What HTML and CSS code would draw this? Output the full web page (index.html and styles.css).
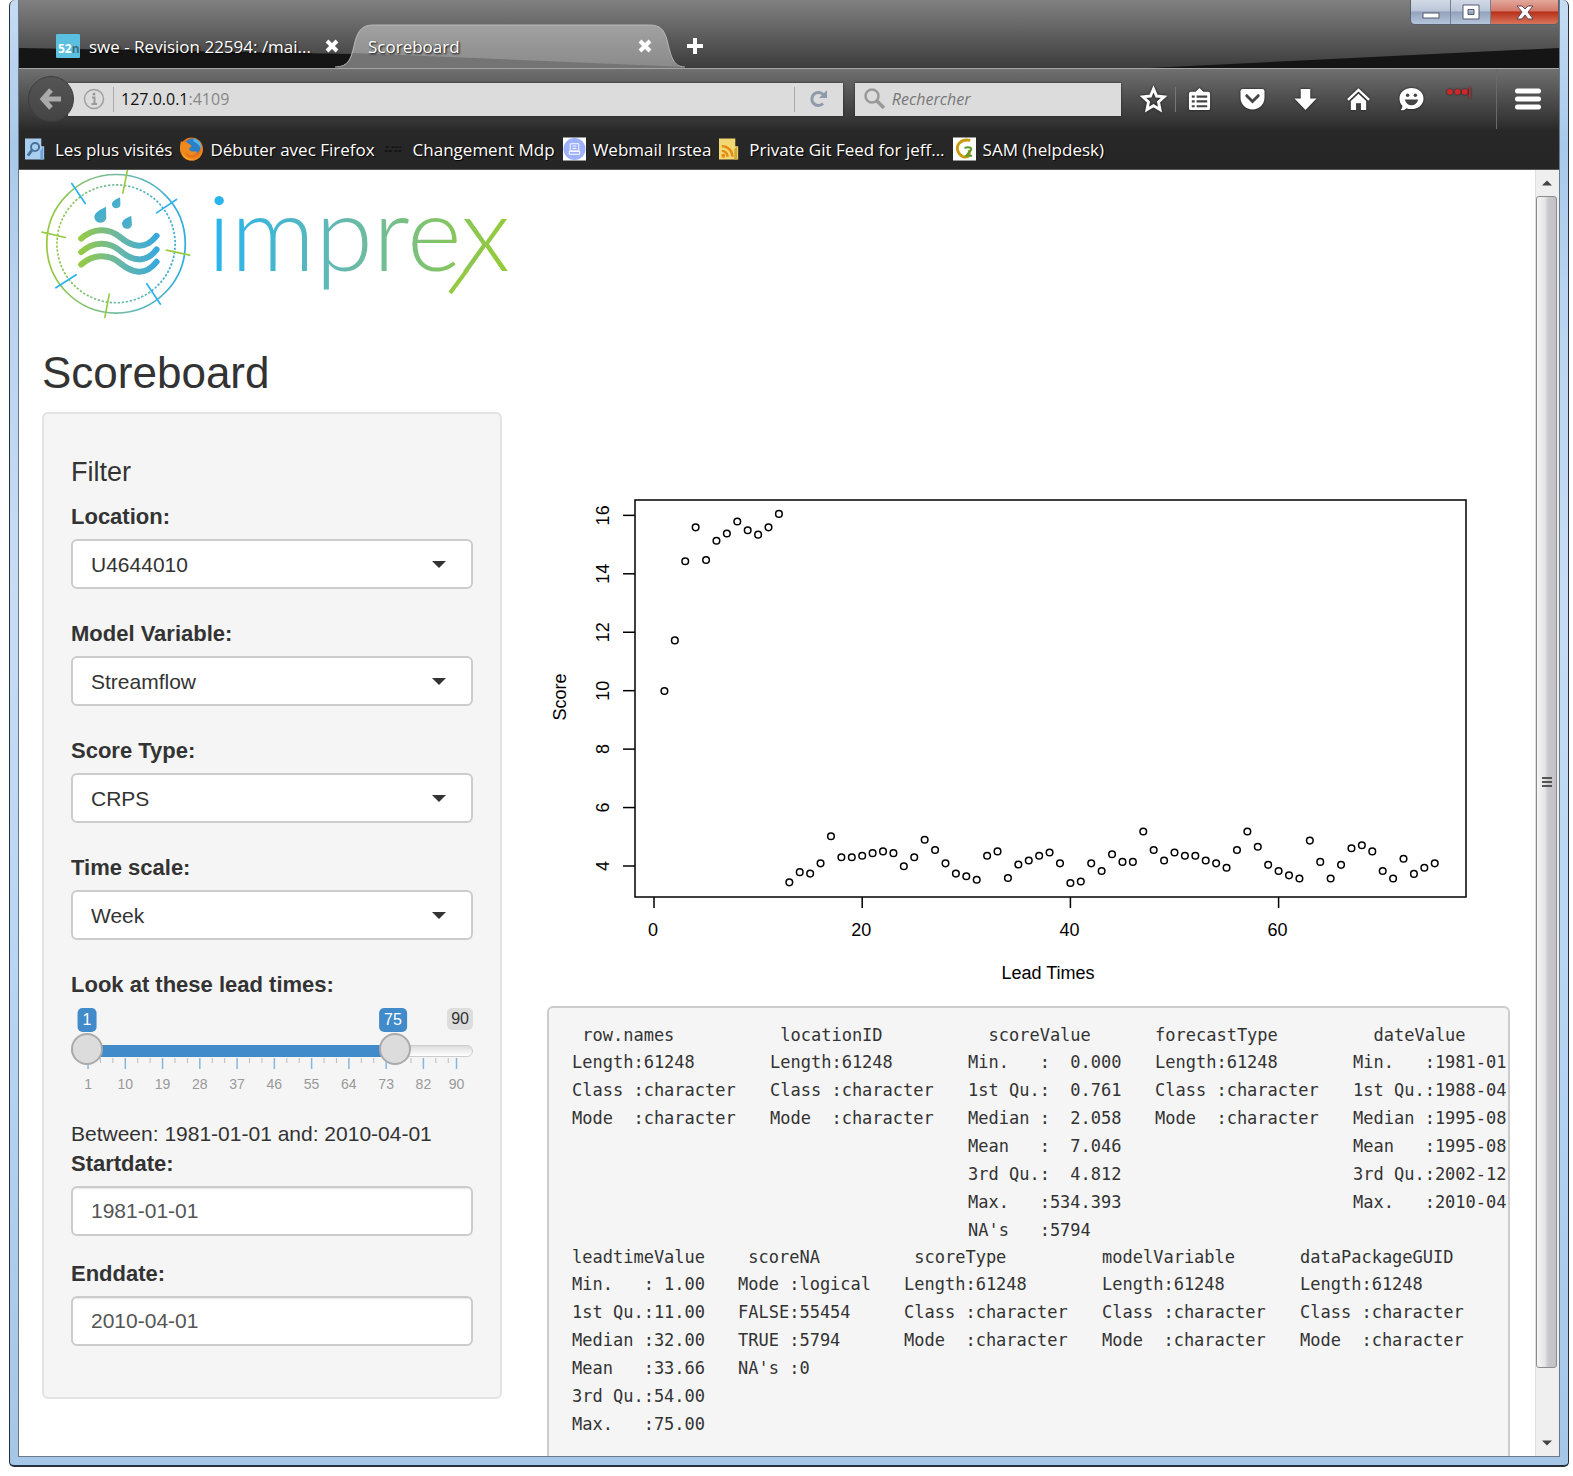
FILE: index.html
```html
<!DOCTYPE html>
<html lang="fr">
<head>
<meta charset="utf-8">
<title>Scoreboard</title>
<link rel="stylesheet" href="styles.css">
</head>
<body>
<div class="window">
  <div class="inner">
    <header class="titlebar">
      <div class="tabs">
        <button class="tab" type="button">
          <svg class="fav" viewBox="0 0 24 24" aria-hidden="true"><rect width="24" height="24" rx="1" fill="#5bbfe0"/><text x="2" y="19" class="fav-text">52<tspan fill="#3d6f7f">n</tspan></text></svg>
          <span class="tab-title">swe - Revision 22594: /mai...</span>
          <svg class="close" viewBox="0 0 14 14" aria-hidden="true"><path d="M2 2 12 12M12 2 2 12"/></svg>
        </button>
        <button class="tab active" type="button">
          <svg class="tab-shape" viewBox="0 0 350 44" preserveAspectRatio="none" aria-hidden="true">
            <defs>
              <linearGradient id="tabfill" x1="0" y1="0" x2="0" y2="1"><stop offset="0" stop-color="#a2a2a2"/><stop offset="1" stop-color="#8a8a8a"/></linearGradient>
              <clipPath id="tabclip"><path d="M0 44C14 43 16 34 19 22C22 8 26 1 38 1H314C326 1 329 6 332 16C336 32 338 43 350 44Z"/></clipPath>
            </defs>
            <g clip-path="url(#tabclip)"><rect width="350" height="44" fill="url(#tabfill)"/><path d="M0 29 18 29 350 43V44H0Z" fill="#747474"/></g>
            <path d="M0 43C14 43 16 34 19 22C22 8 26 1 38 1H314C326 1 329 6 332 16C336 32 338 43 350 43" fill="none" stroke="#b9b9b9"/>
          </svg>
          <span class="tab-title">Scoreboard</span>
          <svg class="close" viewBox="0 0 14 14" aria-hidden="true"><path d="M2 2 12 12M12 2 2 12"/></svg>
        </button>
        <button class="newtab" type="button" aria-label="Nouvel onglet"><svg viewBox="0 0 16 16" width="16" height="16"><path d="M8 0V16M0 8H16" stroke="#fff" stroke-width="4"/></svg></button>
      </div>
      <div class="winbuttons">
        <button class="wb" type="button" aria-label="Réduire"><svg width="18" height="18" viewBox="0 0 18 18"><rect x="1" y="10" width="16" height="5" fill="#fff" stroke="#555b70"/></svg></button>
        <button class="wb" type="button" aria-label="Agrandir"><svg width="18" height="18" viewBox="0 0 18 18"><path d="M1 2H17V16H1ZM6 6.500V11.500H12V6.500Z" fill="#fff" fill-rule="evenodd" stroke="#555b70"/></svg></button>
        <button class="wb wb-close" type="button" aria-label="Fermer"><svg width="18" height="18" viewBox="0 0 18 18"><path d="M1 3H6L9 6 12 3H17L12 9 17 16H12L9 12 6 16H1L6 9Z" fill="#fff" stroke="#5d4550"/></svg></button>
      </div>
    </header>

    <div class="toolbars">
      <div class="nav">
        <button class="back" type="button" aria-label="Retour"><svg width="24" height="24" viewBox="0 0 24 24"><path d="M12 3 4 12 12 21M4 12H22" fill="none" stroke="#aaa" stroke-width="5"/></svg></button>
        <div class="urlbar">
          <svg class="info" viewBox="0 0 22 22" aria-hidden="true"><circle cx="11" cy="11" r="9.500" fill="none" stroke="#a0a0a0" stroke-width="1.500"/><path d="M9 9.500H11.500V16M8.500 16H14" fill="none" stroke="#999" stroke-width="2"/><circle cx="11" cy="6" r="1.500" fill="#999"/></svg>
          <div class="url"><b>127.0.0.1</b>:4109</div>
          <button class="reload" type="button" aria-label="Actualiser"><svg width="20" height="20" viewBox="0 0 20 20"><path d="M14 14.500A6.500 6.500 0 1 1 14.500 6" fill="none" stroke="#8f9baa" stroke-width="3"/><path d="M18 1V9H10Z" fill="#8f9baa"/></svg></button>
        </div>
        <div class="searchbar">
          <svg width="22" height="22" viewBox="0 0 22 22" aria-hidden="true"><circle cx="8" cy="8" r="6.500" fill="none" stroke="#999" stroke-width="2.500"/><path d="M12.500 12.500 20 20" stroke="#999" stroke-width="3.500"/></svg>
          <input class="search" type="text" placeholder="Rechercher" aria-label="Rechercher">
        </div>
        <button class="tool star" type="button" aria-label="Marque-page"><svg viewBox="0 0 26 26"><path d="M13 2 16.200 9.400 24 10.200 18.200 15.500 19.800 23.500 13 19.500 6.200 23.500 7.800 15.500 2 10.200 9.800 9.400Z" fill="none" stroke="#fff" stroke-width="3"/></svg></button>
        <span class="sep"></span>
        <div class="tools">
          <button class="tool" type="button" aria-label="Liste"><svg viewBox="0 0 26 26"><path d="M4 5H9L13 1 17 5H22Q24 5 24 7V22Q24 24 22 24H4Q2 24 2 22V7Q2 5 4 5Z" fill="#fff"/><path d="M5 10H8M5 15H8M5 20H8M10 10H21M10 15H21M10 20H21" stroke="#444" stroke-width="2.200"/></svg></button>
          <button class="tool" type="button" aria-label="Pocket"><svg viewBox="0 0 26 26"><path d="M3 2H23Q25.500 2 25.500 4.500V11C25.500 18 20 23.500 13 23.500S.5 18 .5 11V4.500Q.5 2 3 2Z" fill="#fff"/><path d="M7 9 13 15 19 9" fill="none" stroke="#444" stroke-width="3" stroke-linecap="round"/></svg></button>
          <button class="tool" type="button" aria-label="Téléchargements"><svg viewBox="0 0 26 26"><path d="M8 2H18V12H24.500L13 24 1.500 12H8Z" fill="#fff"/></svg></button>
          <button class="tool" type="button" aria-label="Accueil"><svg viewBox="0 0 26 26"><path d="M2 13.500 13 3 24 13.500" fill="none" stroke="#fff" stroke-width="2.500"/><path d="M5 14.500 13 7 21 14.500V24H15.500V17H10.500V24H5Z" fill="#fff"/></svg></button>
          <button class="tool" type="button" aria-label="Discussion"><svg viewBox="0 0 26 26"><path d="M13 1C20 1 25.500 5.500 25.500 12S20 23 13 23C11 23 9.500 22.600 8 22 6.500 23.500 4 24.500 1.500 24 3 23 3.500 21 3.500 19.500 1.500 17.500.5 15 .5 12 .5 5.500 6 1 13 1Z" fill="#fff"/><circle cx="9" cy="8.500" r="1.800" fill="#444"/><circle cx="17" cy="8.500" r="1.800" fill="#444"/><path d="M6 13H20C19 17 16.500 19 13 19S7 17 6 13Z" fill="#444"/></svg></button>
          <button class="tool pass" type="button" aria-label="Mots de passe"><svg viewBox="0 0 26 26"><circle cx="3" cy="5" r="3"/><circle cx="11" cy="5" r="3"/><circle cx="18.500" cy="5" r="3"/><path d="M23 0H24.500V11H23Z"/></svg></button>
        </div>
        <button class="menu" type="button" aria-label="Menu"><svg width="26" height="22" viewBox="0 0 26 22"><path d="M2.500 3H23.500M2.500 11H23.500M2.500 19H23.500" stroke="#fff" stroke-width="5" stroke-linecap="round"/></svg></button>
      </div>
      <nav class="bookmarks">
        <a href="#"><svg viewBox="0 0 24 24"><path d="M0 1H17V9H20V23H0Z" fill="#a9cdee"/><path d="M16 14 19 9V23H16Z" fill="#6fa5d5"/><circle cx="10.500" cy="10" r="4.200" fill="none" stroke="#47719b" stroke-width="2"/><path d="M7.500 13 3 19" stroke="#47719b" stroke-width="3"/></svg>Les plus visités</a>
        <a href="#"><svg viewBox="0 0 24 24"><circle cx="12" cy="12" r="12" fill="#e8731c"/><circle cx="13" cy="9.500" r="8.500" fill="#2a7fc8"/><path d="M14 1C20 2 23 7 22 12 20 8 18 6 14 4Z" fill="#4db8f0"/><path d="M1 4C3 5 5 5 7 5 9 7 11 7 12 9 10 11 8 12 11 14 14 15 16 14 18 15 15 20 9 19 7 16 4 18 10 22 15 21 21 19 23 14 22 8 26 15 21 24 12 24 3 24-2 14 1 4Z" fill="#f08a1d"/><path d="M2 15C4 21 9 23 14 23 9 24 3 21 2 15Z" fill="#ffd23f"/></svg>Débuter avec Firefox</a>
        <a href="#"><svg viewBox="0 0 24 24"><path d="M3 10H7M9 10H19M2 14H10M12 14H20" stroke="#151515" stroke-width="2" stroke-dasharray="3 1"/></svg>Changement Mdp</a>
        <a href="#"><svg viewBox="0 0 24 24"><rect width="24" height="24" fill="#fff"/><circle cx="12" cy="12" r="11.500" fill="#9fb1fb"/><path d="M7.500 6.500H16.500V14H7.500ZM10 9H14M10 11.500H14M6.500 17.500H17.500V14.500H6.500Z" fill="none" stroke="#fff"/></svg>Webmail Irstea</a>
        <a href="#"><svg viewBox="0 0 24 24"><path d="M0 1H17V9H20V23H0Z" fill="#f2d873"/><path d="M16 12 19 9V23H16Z" fill="#cfa93a"/><path d="M3 9A11 11 0 0 1 14 20M3 14A6 6 0 0 1 9 20" fill="none" stroke="#e58a12" stroke-width="2.500"/><circle cx="4.500" cy="19" r="2" fill="#e58a12"/></svg>Private Git Feed for jeff...</a>
        <a href="#"><svg viewBox="0 0 24 24"><rect width="24" height="24" fill="#fff"/><path d="M18 3C8 1 3 8 5 14 7 20 13 22 17 19V13" fill="none" stroke="#c99b0a" stroke-width="3"/><path d="M12 11C17 9 21 11 18 14L14 19H20" fill="none" stroke="#5d9a2b" stroke-width="2.200"/></svg>SAM (helpdesk)</a>
      </nav>
    </div>

    <div class="viewport">
      <main class="page">
        <svg class="logo" viewBox="124 30 1400 450" role="img" aria-label="imprex">
          <defs>
            <linearGradient id="ring" gradientUnits="userSpaceOnUse" x1="138" y1="250" x2="549" y2="250"><stop offset="0" stop-color="#97c93d"/><stop offset=".55" stop-color="#6fb9a8"/><stop offset="1" stop-color="#2fabe1"/></linearGradient>
            <linearGradient id="wave" gradientUnits="userSpaceOnUse" x1="232" y1="250" x2="470" y2="250"><stop offset="0" stop-color="#97cb42"/><stop offset=".5" stop-color="#6ab7a5"/><stop offset="1" stop-color="#35a9e0"/></linearGradient>
            <linearGradient id="drop" x1="0" y1="0" x2="1" y2="1"><stop offset="0" stop-color="#35a9e0"/><stop offset="1" stop-color="#5ab2b8"/></linearGradient>
            <linearGradient id="word" gradientUnits="userSpaceOnUse" x1="635" y1="0" x2="1515" y2="0"><stop offset="0" stop-color="#29b4ef"/><stop offset=".45" stop-color="#68b9ac"/><stop offset="1" stop-color="#97cc33"/></linearGradient>
          </defs>
          <g transform="scale(1 .986)">
          <g fill="none" stroke="url(#ring)">
            <ellipse cx="343" cy="252" rx="205" ry="208" stroke-width="5"/>
            <ellipse cx="343" cy="252" rx="175" ry="177" stroke-width="5" stroke-dasharray="7 5"/>
          </g>
          <g stroke-width="5" stroke-linecap="round">
            <path stroke="#97cb42" d="M377 30 363 100M124 217 193 233M492 271 561 286M323 403 310 473"/>
            <path stroke="#29b4ef" d="M212 71 252 131M522 119 463 159M165 384 225 345M434 372 474 433"/>
          </g>
          <g fill="none" stroke="url(#wave)" stroke-width="18" stroke-linecap="round">
            <path d="M240 236C275 205 320 202 355 232S430 272 463 228"/>
            <path d="M240 277C275 246 320 243 355 273S430 313 463 269"/>
            <path d="M240 314C275 283 320 280 355 310S430 350 463 306"/>
          </g>
          <g fill="url(#drop)">
            <path d="M313 141C300 148 279 158 279 171 279 182 287 189 297 189 308 189 316 181 314 168Z"/>
            <path d="M355 112C346 117 331 123 331 133 331 141 337 145 344 145 352 145 357 140 356 131Z"/>
            <path d="M388 168C378 173 361 180 361 191 361 201 368 207 376 207 385 207 391 200 390 190Z"/>
          </g>
          </g>
          <text class="wordmark" x="614" y="328" fill="url(#word)">imprex</text>
          <path d="M1384 324 1332 394" stroke="#93ca41" stroke-width="12"/>
        </svg>
        <h2>Scoreboard</h2>
        <div class="layout">
          <form class="well">
            <h4>Filter</h4>
            <div class="group"><label for="loc">Location:</label><div class="select"><select id="loc"><option>U4644010</option></select></div></div>
            <div class="group"><label for="mv">Model Variable:</label><div class="select"><select id="mv"><option>Streamflow</option></select></div></div>
            <div class="group"><label for="st">Score Type:</label><div class="select"><select id="st"><option>CRPS</option></select></div></div>
            <div class="group"><label for="ts">Time scale:</label><div class="select"><select id="ts"><option>Week</option></select></div></div>
            <div class="slider-group">
              <label for="from">Look at these lead times:</label>
              <div class="slider">
                <output class="bubble from" for="from">1</output>
                <output class="bubble to" for="to">75</output>
                <span class="bubble max">90</span>
                <div class="track"><div class="fill"></div></div>
                <input id="from" class="range" type="range" min="1" max="90" value="1">
                <input id="to" class="range" type="range" min="1" max="90" value="75" aria-label="Lead time, upper bound">
              </div>
              <svg class="scale" id="scale" viewBox="0 0 401 38" aria-hidden="true"></svg>
            </div>
            <p>Between: 1981-01-01 and: 2010-04-01</p>
            <div class="date"><label for="sd">Startdate:</label><input id="sd" class="field" type="text" value="1981-01-01"></div>
            <div class="date"><label for="ed">Enddate:</label><input id="ed" class="field" type="text" value="2010-04-01"></div>
          </form>
          <div class="results">
            <svg class="plot" id="plot" viewBox="0 0 963 594" role="img" aria-label="Score by lead time"></svg>
            <div class="summary">
              <table>
                <colgroup><col class="c19"><col class="c19"><col class="c18"><col class="c19"><col></colgroup>
                <thead><tr><th> row.names</th><th> locationID</th><th>  scoreValue</th><th>forecastType</th><th>  dateValue</th></tr></thead>
                <tbody>
                <tr><td>Length:61248</td><td>Length:61248</td><td>Min.   :  0.000</td><td>Length:61248</td><td>Min.   :1981-01</td></tr>
                <tr><td>Class :character</td><td>Class :character</td><td>1st Qu.:  0.761</td><td>Class :character</td><td>1st Qu.:1988-04</td></tr>
                <tr><td>Mode  :character</td><td>Mode  :character</td><td>Median :  2.058</td><td>Mode  :character</td><td>Median :1995-08</td></tr>
                <tr><td></td><td></td><td>Mean   :  7.046</td><td></td><td>Mean   :1995-08</td></tr>
                <tr><td></td><td></td><td>3rd Qu.:  4.812</td><td></td><td>3rd Qu.:2002-12</td></tr>
                <tr><td></td><td></td><td>Max.   :534.393</td><td></td><td>Max.   :2010-04</td></tr>
                <tr><td></td><td></td><td>NA's   :5794</td><td></td><td></td></tr>
                </tbody>
              </table>
              <table>
                <colgroup><col class="c16"><col class="c16"><col class="c19"><col class="c19"><col></colgroup>
                <thead><tr><th>leadtimeValue</th><th> scoreNA</th><th> scoreType</th><th>modelVariable</th><th>dataPackageGUID</th></tr></thead>
                <tbody>
                <tr><td>Min.   : 1.00</td><td>Mode :logical</td><td>Length:61248</td><td>Length:61248</td><td>Length:61248</td></tr>
                <tr><td>1st Qu.:11.00</td><td>FALSE:55454</td><td>Class :character</td><td>Class :character</td><td>Class :character</td></tr>
                <tr><td>Median :32.00</td><td>TRUE :5794</td><td>Mode  :character</td><td>Mode  :character</td><td>Mode  :character</td></tr>
                <tr><td>Mean   :33.66</td><td>NA's :0</td><td></td><td></td><td></td></tr>
                <tr><td>3rd Qu.:54.00</td><td></td><td></td><td></td><td></td></tr>
                <tr><td>Max.   :75.00</td><td></td><td></td><td></td><td></td></tr>
                </tbody>
              </table>
            </div>
          </div>
        </div>
      </main>
      <div class="scrollbar" aria-hidden="true">
        <span class="arrow"><svg width="12" height="8" viewBox="0 0 12 8"><path d="M1 6.500 6 1.500 11 6.500Z" fill="#444"/></svg></span>
        <div class="rail"><div class="thumb"><i></i><i></i><i></i></div></div>
        <span class="arrow"><svg width="12" height="8" viewBox="0 0 12 8"><path d="M1 1.500 6 6.500 11 1.500Z" fill="#444"/></svg></span>
      </div>
    </div>
  </div>
</div>
<script src="script.js"></script>
</body>
</html>
```
FILE: styles.css
```css
* { box-sizing: border-box; }
body { margin: 0; background: #fff; font-family: "Liberation Sans", Arial, sans-serif; }
button { border: 0; padding: 0; margin: 0; background: none; color: inherit; font: inherit; display: flex; align-items: center; justify-content: center; }

/* window frame */
.window {
  margin: 0 4px 0 9px; height: calc(100vh - 9px); display: flex;
  padding: 0 8px 8px; border: solid #26303c; border-width: 0 1px 2px;
  border-radius: 6px 6px 5px 5px;
  background: linear-gradient(#c6dcf3, #a9c9ea 10%, #b9d3f0 20%, #c8dcf4 40%, #b9d6f4 65%, #a6c6e8);
}
.inner { flex: 1; min-width: 0; display: flex; flex-direction: column; border: solid #69798a; border-width: 0 1px 1px; background: #fff; }

/* title bar and tabs */
.titlebar { position: relative; z-index: 0; height: 68px; flex: none; display: flex; justify-content: space-between; background: linear-gradient(#808080, #6c6c6c 30%, #3c3c3c); font-family: "Open Sans", "Noto Sans", sans-serif; color: #fff; }
.titlebar::before { content: ""; position: absolute; inset: 0; z-index: -1; background: #151515; clip-path: polygon(0 48px, 333px 54px, 671px 68px, 1130px 68px, 100% 48px, 100% 100%, 0 100%); }
.tabs { display: flex; align-items: flex-end; }
.tab { position: relative; height: 44px; width: 320px; padding: 0 0 0 37px; justify-content: flex-start; gap: 9px; font-size: 17px; text-shadow: 1px 1px 2px #000; }
.tab.active { width: 350px; margin-left: -4px; padding: 0 0 0 33px; }
.tab-title { flex: 1; text-align: left; white-space: nowrap; position: relative; }
.tab-shape { position: absolute; inset: 0; width: 100%; height: 100%; }
.fav { width: 24px; height: 24px; flex: none; }
.fav-text { font: bold 12px "Open Sans", sans-serif; fill: #fff; text-shadow: none; }
.close { position: relative; width: 14px; height: 14px; flex: none; fill: none; stroke: #fff; stroke-width: 4; }
.active .close { margin-right: 33px; }
.newtab { height: 44px; width: 20px; }
.winbuttons { display: flex; height: 25px; border: solid #59616e; border-width: 0 1px 1px; border-radius: 0 0 5px 5px; overflow: hidden; }
.wb { width: 40px; border-right: 1px solid #77808f; background: linear-gradient(#d3dae6, #bac6d8 45%, #93a3bd 50%, #b5c5da); }
.wb-close { width: 67px; border: 0; background: linear-gradient(#e3a79b, #d27a6a 45%, #b8301a 50%, #d7755a); }

/* toolbars */
.toolbars { flex: none; border-top: 1px solid #a5a5a5; background: linear-gradient(#707070, #545454 24%, #3a3a3a 48%, #282828 62%, #252525); font-family: "Open Sans", "Noto Sans", sans-serif; }
.nav { height: 60px; display: flex; align-items: center; padding-left: 9px; }
.back { width: 46px; height: 46px; border-radius: 50%; background: linear-gradient(#555, #444); border: 1px solid #3c3c3c; z-index: 1; flex: none; }
.urlbar { flex: 780; height: 33px; margin-left: -6px; padding-left: 15px; background: #dcdcdc; display: flex; align-items: center; font-size: 16px; box-shadow: 0 0 2px #222; }
.info { width: 22px; height: 22px; flex: none; }
.url { flex: 1; margin-left: 8px; padding-left: 7px; border-left: 1px solid #aaa; line-height: 25px; color: #888; }
.url b { font-weight: 400; color: #111; }
.reload { width: 49px; height: 25px; border-left: 1px solid #aaa; }
.searchbar { flex: 264; min-width: 0; height: 33px; margin-left: 12px; padding-left: 9px; background: #dcdcdc; display: flex; align-items: center; gap: 6px; box-shadow: 0 0 2px #222; }
.search { flex: 1; min-width: 0; border: 0; padding: 0; background: none; font: italic 16px "Open Sans", sans-serif; }
.search::placeholder { color: #777; }
.tool { width: 46px; height: 46px; flex: none; }
.tool svg { width: 25px; height: 25px; filter: drop-shadow(0 0 1px #111); overflow: visible; }
.star { width: 38px; margin-left: 13px; margin-right: 3px; }
.sep { width: 1px; height: 25px; background: #777; }
.tools { display: flex; gap: 7px; margin-right: 9px; }
.pass { justify-content: flex-start; }
.pass svg { fill: #d32727; margin-left: 6px; }
.menu { width: 63px; height: 60px; flex: none; border-left: 1px solid #6a6a6a; }
.bookmarks { height: 40px; display: flex; align-items: center; gap: 8px; padding: 0 6px; font-size: 17px; }
.bookmarks a { display: flex; align-items: center; gap: 7px; color: #fff; text-decoration: none; white-space: nowrap; text-shadow: 1px 1px 1px #000; }
.bookmarks svg { width: 23px; height: 24px; flex: none; }

/* page */
.viewport { flex: 1; min-height: 0; display: flex; border-top: 1px solid #555; overflow: hidden; }
.page { flex: 1; min-width: 0; padding: 0 25px 0 23px; color: #333; }
.logo { display: block; width: 473px; height: 152px; overflow: visible; }
.wordmark { font-family: Lato, sans-serif; font-weight: 300; font-size: 310px; }
h2 { margin: 27px 0 15px; font-size: 44px; line-height: 48px; font-weight: 400; }
.layout { display: grid; grid-template-columns: 460fr 963fr; gap: 45px; align-items: start; }
.well { border: 2px solid #e3e3e3; border-radius: 6px; background: #f5f5f5; padding: 42px 27px 51px; }
h4 { margin: 0 0 14px; font-size: 27px; line-height: 32px; font-weight: 400; }
label { display: block; font-size: 22px; line-height: 30px; font-weight: 700; margin-bottom: 7px; }
.group { margin-bottom: 30px; }
.select { display: grid; align-items: center; }
.select::after { content: ""; grid-area: 1 / 1; justify-self: end; margin-right: 27px; border: 7px solid transparent; border-top-color: #333; border-bottom: 0; pointer-events: none; }
select, .field { width: 100%; height: 50px; padding: 0 18px; border: 2px solid #ccc; border-radius: 6px; background: #fff; font: 21px "Liberation Sans", Arial, sans-serif; color: #333; }
select { grid-area: 1 / 1; appearance: none; }
.field { display: block; color: #555; box-shadow: inset 0 1px 1px #e8e8e8; }
.slider-group label { margin-bottom: 8px; }
.slider { position: relative; height: 50px; }
.bubble { position: absolute; top: 0; transform: translateX(-50%); padding: 0 5px; border-radius: 5px; background: #428bca; color: #fff; font-size: 16px; line-height: 24px; }
.from { left: 16px; }
.to { left: 322px; }
.max { right: 0; transform: none; padding: 0 4px; background: #ddd; color: #333; line-height: 22px; }
.track { position: absolute; left: 0; right: 0; top: 37px; height: 12px; border: 1px solid #ccc; border-radius: 8px; background: linear-gradient(#ddd, #fff); }
.fill { height: 12px; margin: -1px 78px 0 15px; background: #428bca; }
.range { appearance: none; position: absolute; left: 0; top: 25px; width: 100%; height: 32px; margin: 0; background: none; pointer-events: none; }
.range::-webkit-slider-thumb { appearance: none; width: 32px; height: 32px; border: 2px solid #aaa; border-radius: 50%; background: #dcdcdc; pointer-events: auto; }
.scale { display: block; width: 100%; font-size: 14px; fill: #999; }
.well p { margin: 23px 0 0; font-size: 21px; line-height: 30px; }
.date { margin-bottom: 23px; }
.date:last-child { margin-bottom: 0; }

/* plot and summary */
.plot { display: block; width: 100%; font-size: 18px; }
.summary { border: 2px solid #ccc; border-radius: 6px; background: #f5f5f5; padding: 14px 0 60px 23px; overflow: hidden; }
table { width: 100%; table-layout: fixed; border-collapse: collapse; font: 17px "DejaVu Sans Mono", monospace; }
th, td { padding: 0; height: 28px; line-height: 26px; text-align: left; font-weight: 400; white-space: pre; }
th { height: 26px; }
.c16 { width: 166px; }
.c18 { width: 187px; }
.c19 { width: 198px; }

/* scroll bar */
.scrollbar { width: 24px; flex: none; display: flex; flex-direction: column; background: #efefef; border-left: 1px solid #ddd; padding-right: 2px; }
.arrow { height: 26px; display: flex; align-items: center; justify-content: center; }
.rail { flex: 1; }
.thumb { height: 95%; border: 1px solid #8c8c8c; border-radius: 3px; background: linear-gradient(90deg, #f5f5f5, #e6e6e6 40%, #c8c8cc 60%, #c0c0c6); display: flex; flex-direction: column; align-items: center; justify-content: center; gap: 2px; }
.thumb i { width: 10px; height: 2px; background: #555; }
```
FILE: script.js
```js
const NS = "http://www.w3.org/2000/svg";
function add(parent, name, attrs, text) {
  const el = document.createElementNS(NS, name);
  for (const key in attrs) el.setAttribute(key, attrs[key]);
  if (text !== undefined) el.textContent = text;
  parent.appendChild(el);
}

/* score for each lead time, starting at 1 */
const scores = [
  9.99, 11.72, 14.43, 15.59, 14.47, 15.13, 15.38, 15.79, 15.49, 15.34, 15.59, 16.05,
  3.44, 3.79, 3.74, 4.09, 5.02, 4.30, 4.30, 4.35, 4.44, 4.50, 4.44, 3.99, 4.30, 4.90,
  4.55, 4.09, 3.74, 3.65, 3.53, 4.35, 4.50, 3.59, 4.05, 4.19, 4.35, 4.46, 4.09, 3.42,
  3.47, 4.09, 3.83, 4.40, 4.14, 4.14, 5.18, 4.55, 4.19, 4.46, 4.35, 4.35, 4.19, 4.09,
  3.94, 4.55, 5.18, 4.66, 4.04, 3.83, 3.68, 3.57, 4.87, 4.14, 3.57, 4.04, 4.61, 4.71,
  4.50, 3.83, 3.57, 4.25, 3.73, 3.94, 4.09
];
const plot = document.getElementById("plot");
const px = t => 107 + t * 10.41;
const py = s => 454 - (s - 4) * 29.22;
const line = { stroke: "#000", "stroke-width": 1.5, fill: "none" };
add(plot, "rect", { x: 88, y: 88, width: 831, height: 397, ...line });
for (let s = 4; s <= 16; s += 2) {
  add(plot, "path", { d: `M76 ${py(s)}H88`, ...line });
  add(plot, "text", { transform: `translate(62 ${py(s)}) rotate(-90)`, "text-anchor": "middle" }, s);
}
for (let t = 0; t <= 60; t += 20) {
  add(plot, "path", { d: `M${px(t)} 485V496`, ...line });
  add(plot, "text", { x: px(t) - 1, y: 524, "text-anchor": "middle" }, t);
}
add(plot, "text", { x: 501, y: 567, "text-anchor": "middle" }, "Lead Times");
add(plot, "text", { transform: "translate(19 285) rotate(-90)", "text-anchor": "middle" }, "Score");
scores.forEach((s, i) => add(plot, "circle", { cx: px(i + 1), cy: py(s), r: 3.3, ...line }));

/* slider ticks */
const scale = document.getElementById("scale");
const sx = v => 17 + (v - 1) * 4.13;
for (let v = 1; v <= 82; v += 9) {
  for (const m of [3, 6]) if (v + m < 90) add(scale, "path", { d: `M${sx(v + m)} 0V5`, stroke: "#bbb" });
}
for (const v of [1, 10, 19, 28, 37, 46, 55, 64, 73, 82, 90]) {
  add(scale, "path", { d: `M${sx(v)} 0V11`, stroke: "#89b6dd", "stroke-width": 1.5 });
  add(scale, "text", { x: sx(v), y: 31, "text-anchor": "middle" }, v);
}
```
